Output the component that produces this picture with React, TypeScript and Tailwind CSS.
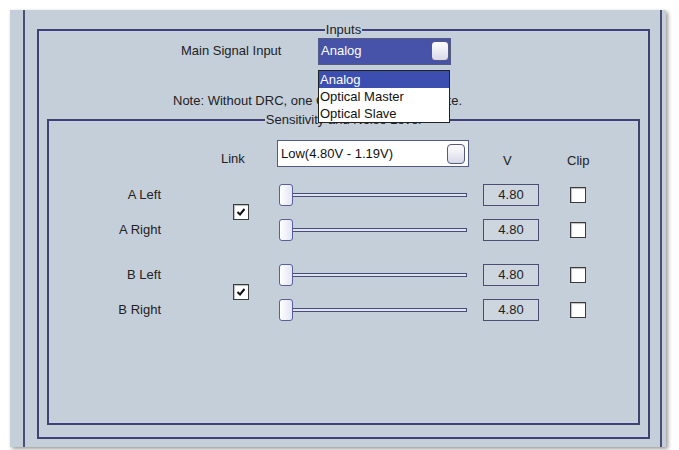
import React from 'react';

const font = { fontFamily: '"Liberation Sans", Arial, sans-serif' };

function Check({ checked }: { checked?: boolean }) {
  return (
    <div className="w-[16px] h-[16px] border border-[#3b3b3b] bg-white flex items-center justify-center shadow-[inset_1px_1px_1px_#bbb]">
      {checked && (
        <svg width="10" height="10" viewBox="0 0 10 10">
          <path d="M1.5 5 L4 7.5 L8.5 2" stroke="#111" strokeWidth="2" fill="none" />
        </svg>
      )}
    </div>
  );
}

function ComboButton() {
  return (
    <div className="w-[18px] h-[20px] rounded-[4px] border border-[#555a80] bg-gradient-to-b from-white to-[#d8d8e8]" />
  );
}

function Slider() {
  return (
    <div className="relative w-[188px] h-[22px] flex items-center">
      <div className="ml-[6px] w-[182px] h-[4px] border border-[#4a4e75] bg-[#dde2f4]" />
      <div className="absolute left-0 top-0 w-[14px] h-[22px] rounded-[3px] border border-[#5a5f9a] bg-gradient-to-r from-white to-[#e2e4f6]" />
    </div>
  );
}

function Row({ label }: { label: string }) {
  return (
    <div className="flex items-center h-[22px]">
      <div className="w-[112px] text-[13px] text-[#222] text-right">{label}</div>
      <div className="w-[118px]" />
      <Slider />
      <div className="ml-[16px] w-[56px] h-[22px] border border-[#4a4e75] bg-[#cdd5df] flex items-center justify-center text-[13px] text-[#222]">
        4.80
      </div>
      <div className="ml-[31px]">
        <Check />
      </div>
    </div>
  );
}

export default function App() {
  return (
    <div className="w-[679px] h-[450px] bg-white pt-[10px] pl-[10px] overflow-hidden" style={font}>
      <div className="w-[656px] h-[437px] bg-[#c5cfda] shadow-[2px_2px_4px_rgba(0,0,0,0.4)] pl-[13px] pr-[4px]">
        <div className="h-full border-x-2 border-[#4a4e75] pl-[12px] pr-[10px] pt-[13px] pb-[8px]">
          <fieldset className="relative h-full border-2 border-[#3e4270] shadow-[inset_0_0_0_1px_#c9cdf2] px-[8px] pb-[6px]">
            <legend className="mx-auto px-[1px] text-[13px] text-[#222] leading-[14px]">Inputs</legend>
            <div className="flex items-center h-[28px]">
              <div className="w-[134px]" />
              <div className="w-[137px] text-[13px] text-[#222]">Main Signal Input</div>
              <div className="w-[133px] h-[27px] border border-[#555a80] bg-[#4653a8] flex items-center justify-between pl-[2px] pr-[1px]">
                <span className="text-[13px] text-white">Analog</span>
                <ComboButton />
              </div>
            </div>
            <div className="flex items-center h-[20px] mt-[26px] text-[13px] text-[#222]">
              <div className="w-[126px]" />
              Note: Without DRC, one Optical Input will operate.
            </div>
            <div className="absolute left-[279px] top-[33px] w-[132px] bg-white border border-[#222] text-[13px] text-[#111] leading-[17px] z-10">
              <div className="bg-[#3c4fb0] text-white pl-[1px]">Analog</div>
              <div className="pl-[1px]">Optical Master</div>
              <div className="pl-[1px]">Optical Slave</div>
            </div>
            <fieldset className="h-[312px] mt-[2px] border-2 border-[#3e4270] shadow-[inset_0_0_0_1px_#c9cdf2]">
              <legend className="mx-auto px-[1px] text-[13px] text-[#222] leading-[14px]">Sensitivity and Noise Level</legend>
              <div className="flex items-end h-[30px] mt-[13px]">
                <div className="w-[172px]" />
                <div className="w-[56px] text-[13px] text-[#222] pb-[2px]">Link</div>
                <div className="w-[192px] h-[27px] border border-[#555a80] bg-white flex items-center justify-between pl-[3px] pr-[3px] self-start">
                  <span className="text-[13px] text-[#111]">Low(4.80V - 1.19V)</span>
                  <ComboButton />
                </div>
                <div className="w-[34px]" />
                <div className="w-[64px] text-[13px] text-[#222]">V</div>
                <div className="text-[13px] text-[#222]">Clip</div>
              </div>
              <div className="relative mt-[14px] flex flex-col gap-[13px]">
                <Row label="A Left" />
                <Row label="A Right" />
                <div className="absolute left-[184px] top-[20px]"><Check checked /></div>
              </div>
              <div className="relative mt-[23px] flex flex-col gap-[13px]">
                <Row label="B Left" />
                <Row label="B Right" />
                <div className="absolute left-[184px] top-[20px]"><Check checked /></div>
              </div>
            </fieldset>
          </fieldset>
        </div>
      </div>
    </div>
  );
}
